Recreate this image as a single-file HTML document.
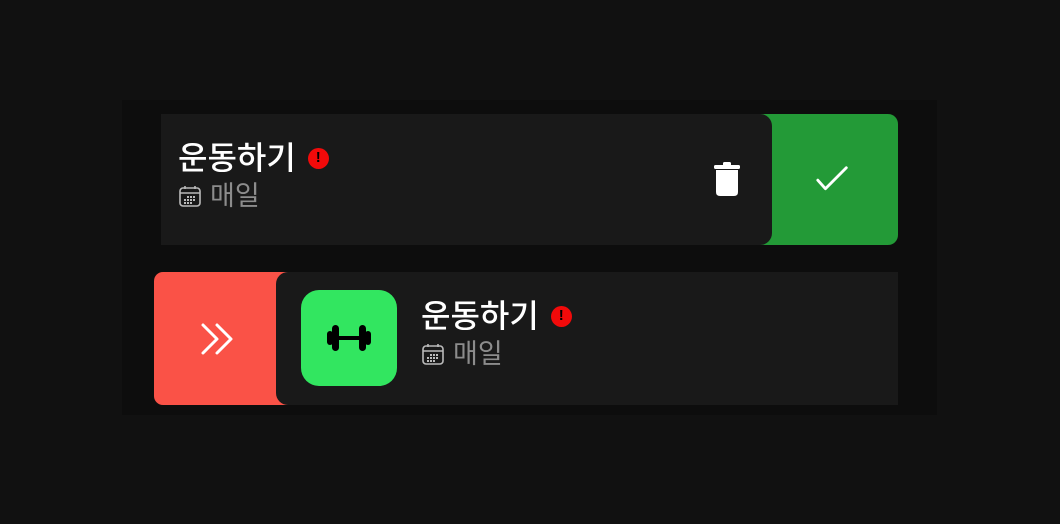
<!DOCTYPE html>
<html><head><meta charset="utf-8"><style>
*{margin:0;padding:0;box-sizing:border-box}
body{width:1060px;height:524px;background:#111111;position:relative;overflow:hidden;font-family:"Liberation Sans","Noto Sans CJK KR",sans-serif}
.abs{position:absolute}
.title{color:#fff;font-size:32px;line-height:38px;font-weight:500}
.sub{color:#8c8c8c;font-size:27px;line-height:32px;display:flex;align-items:center;gap:8px}
.alert{width:21px;height:21px;border-radius:50%;background:#f20a0a;color:#000;font-size:15px;font-weight:bold;display:flex;align-items:center;justify-content:center}
</style></head><body>
<div class="abs" style="left:122px;top:100px;width:815px;height:315px;background:#0d0d0d"></div>

<div class="abs" style="left:740px;top:114px;width:158px;height:131px;background:#239a37;border-radius:10px"></div>
<svg class="abs" style="left:814px;top:164px" width="38" height="32" viewBox="0 0 38 32"><path d="M4 17 L12 26 L34 4" stroke="#fff" stroke-width="3" fill="none" stroke-linecap="round" stroke-linejoin="round" transform="scale(0.95)"/></svg>
<div class="abs" style="left:161px;top:114px;width:611px;height:131px;background:#191919;border-radius:0 12px 12px 0"></div>
<div class="abs title" style="left:178px;top:139px;display:flex;align-items:center;gap:12px">운동하기<div class="alert">!</div></div>
<div class="abs sub" style="left:178px;top:180px"><svg width="24" height="24" viewBox="0 0 24 24"><rect x="2" y="4" width="20" height="18" rx="3" fill="none" stroke="#bbb" stroke-width="1.6"/><line x1="2" y1="9" x2="22" y2="9" stroke="#bbb" stroke-width="1.6"/><line x1="7" y1="2" x2="7" y2="5" stroke="#bbb" stroke-width="1.6"/><line x1="17" y1="2" x2="17" y2="5" stroke="#bbb" stroke-width="1.6"/><g fill="#bbb"><rect x="9" y="12" width="2" height="2"/><rect x="12" y="12" width="2" height="2"/><rect x="15" y="12" width="2" height="2"/><rect x="6" y="15" width="2" height="2"/><rect x="9" y="15" width="2" height="2"/><rect x="12" y="15" width="2" height="2"/><rect x="15" y="15" width="2" height="2"/><rect x="6" y="18" width="2" height="2"/><rect x="9" y="18" width="2" height="2"/><rect x="12" y="18" width="2" height="2"/></g></svg>매일</div>
<svg class="abs" style="left:713px;top:161px" width="28" height="36" viewBox="0 0 28 36"><rect x="1" y="4" width="26" height="4" rx="1.5" fill="#fff"/><rect x="10" y="1" width="8" height="4" rx="1.5" fill="#fff"/><path d="M3 9 H25 V31 Q25 35 21 35 H7 Q3 35 3 31 Z" fill="#fff"/></svg>

<div class="abs" style="left:154px;top:272px;width:150px;height:133px;background:#fa5247;border-radius:9px"></div>
<svg class="abs" style="left:200px;top:322px" width="38" height="34" viewBox="0 0 38 34"><path d="M3 3 L17 17 L3 31 M17 3 L31 17 L17 31" stroke="#fff" stroke-width="3" fill="none" stroke-linecap="round" stroke-linejoin="round"/></svg>
<div class="abs" style="left:276px;top:272px;width:622px;height:133px;background:#191919;border-radius:12px 0 0 12px"></div>
<div class="abs" style="left:301px;top:290px;width:96px;height:96px;background:#32e660;border-radius:18px"></div>
<svg class="abs" style="left:326px;top:325px" width="46" height="26" viewBox="0 0 46 26"><rect x="6" y="0" width="7" height="26" rx="3.5" fill="#000"/><rect x="33" y="0" width="7" height="26" rx="3.5" fill="#000"/><rect x="1" y="6" width="6" height="14" rx="3" fill="#000"/><rect x="39" y="6" width="6" height="14" rx="3" fill="#000"/><rect x="12" y="11" width="22" height="4" fill="#000"/></svg>
<div class="abs title" style="left:421px;top:297px;display:flex;align-items:center;gap:12px">운동하기<div class="alert">!</div></div>
<div class="abs sub" style="left:421px;top:338px"><svg width="24" height="24" viewBox="0 0 24 24"><rect x="2" y="4" width="20" height="18" rx="3" fill="none" stroke="#bbb" stroke-width="1.6"/><line x1="2" y1="9" x2="22" y2="9" stroke="#bbb" stroke-width="1.6"/><line x1="7" y1="2" x2="7" y2="5" stroke="#bbb" stroke-width="1.6"/><line x1="17" y1="2" x2="17" y2="5" stroke="#bbb" stroke-width="1.6"/><g fill="#bbb"><rect x="9" y="12" width="2" height="2"/><rect x="12" y="12" width="2" height="2"/><rect x="15" y="12" width="2" height="2"/><rect x="6" y="15" width="2" height="2"/><rect x="9" y="15" width="2" height="2"/><rect x="12" y="15" width="2" height="2"/><rect x="15" y="15" width="2" height="2"/><rect x="6" y="18" width="2" height="2"/><rect x="9" y="18" width="2" height="2"/><rect x="12" y="18" width="2" height="2"/></g></svg>매일</div>
</body></html>
